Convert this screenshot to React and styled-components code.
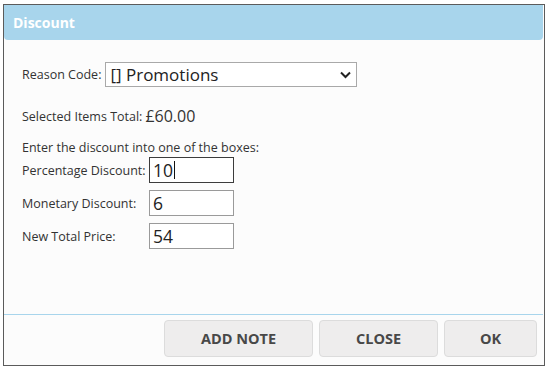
import React from 'react'
import styled, { createGlobalStyle } from 'styled-components'

const GlobalStyle = createGlobalStyle`
  body {
    margin: 0;
    background: #ffffff;
    font-family: 'Open Sans', 'Liberation Sans', sans-serif;
  }
`

const Dialog = styled.div`
  box-sizing: border-box;
  margin: 4px 0 0 3px;
  width: 542px;
  height: 362px;
  border: 1px solid #5b5b5b;
  background: #fcfcfc;
  display: flex;
  flex-direction: column;
`

const Header = styled.div`
  height: 35px;
  background: #a8d5ec;
  border-radius: 0 0 4px 4px;
  margin-right: 1px;
  display: flex;
  align-items: center;
  padding-left: 9px;
  color: #ffffff;
  font-weight: 700;
  font-size: 14px;
`

const Body = styled.div`
  flex: 1;
  padding: 22px 0 0 18px;
  color: #333333;
  font-size: 12.5px;
`

const Row = styled.div`
  display: flex;
  align-items: center;
  margin-top: ${(p) => p.top || 0}px;
`

const Label = styled.span`
  margin-right: 4px;
`

const Select = styled.div`
  box-sizing: border-box;
  width: 252px;
  height: 25px;
  border: 1px solid #a9a9a9;
  background: #ffffff;
  display: flex;
  align-items: center;
  justify-content: space-between;
  padding: 0 5px 0 4px;
  font-size: 17px;
  color: #222222;
`

const Amount = styled.span`
  font-size: 16px;
  margin-left: 3px;
`

const Fields = styled.div`
  display: grid;
  grid-template-columns: 127px 85px;
  row-gap: 7px;
  align-items: center;
  margin-top: 1px;
`

const Input = styled.div`
  box-sizing: border-box;
  height: 26px;
  border: 1px solid ${(p) => (p.active ? '#3c3c3c' : '#9a9a9a')};
  background: #ffffff;
  display: flex;
  align-items: center;
  padding-left: 3px;
  font-size: 17.5px;
  color: #222222;
`

const Caret = styled.span`
  display: inline-block;
  width: 1px;
  height: 18px;
  background: #111111;
  margin-left: 1px;
`

const Footer = styled.div`
  border-top: 1px solid #a8d5ec;
  margin-right: 1px;
  display: flex;
  justify-content: flex-end;
  gap: 6px;
  padding: 5px 6px 8px 0;
`

const Button = styled.button`
  box-sizing: border-box;
  width: ${(p) => p.w}px;
  height: 37px;
  background: #eeeded;
  border: 1px solid #dcdcdc;
  border-radius: 4px;
  font-family: 'Open Sans', 'Liberation Sans', sans-serif;
  font-weight: 700;
  font-size: 14.5px;
  color: #484848;
`

const Chevron = () => (
  <svg width="11" height="8" viewBox="0 0 11 8">
    <path d="M1 1.5 L5.5 6 L10 1.5" fill="none" stroke="#222" strokeWidth="2" />
  </svg>
)

const App = () => (
  <>
    <GlobalStyle />
    <Dialog>
      <Header>Discount</Header>
      <Body>
        <Row>
          <Label>Reason Code:</Label>
          <Select>
            <span>[] Promotions</span>
            <Chevron />
          </Select>
        </Row>
        <Row top={18}>
          <span>Selected Items Total:</span>
          <Amount>£60.00</Amount>
        </Row>
        <Row top={12}>Enter the discount into one of the boxes:</Row>
        <Fields>
          <span>Percentage Discount:</span>
          <Input active>
            10<Caret />
          </Input>
          <span>Monetary Discount:</span>
          <Input>6</Input>
          <span>New Total Price:</span>
          <Input>54</Input>
        </Fields>
      </Body>
      <Footer>
        <Button w={149}>ADD NOTE</Button>
        <Button w={119}>CLOSE</Button>
        <Button w={93}>OK</Button>
      </Footer>
    </Dialog>
  </>
)

export default App
